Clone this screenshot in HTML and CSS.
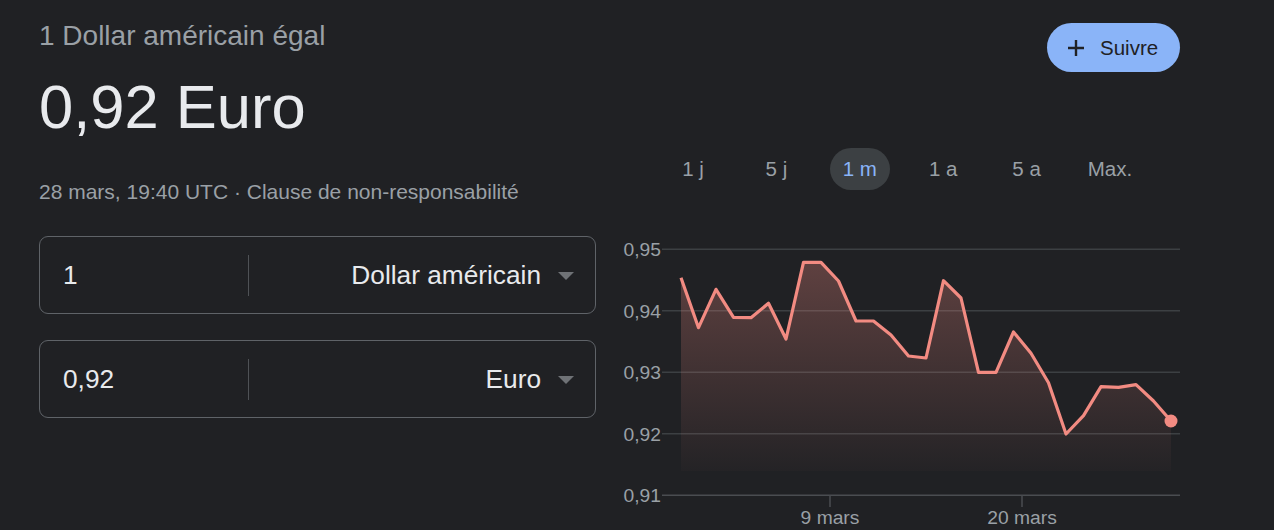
FILE: index.html
```html
<!DOCTYPE html>
<html lang="fr">
<head>
<meta charset="UTF-8">
<meta name="viewport" content="width=device-width, initial-scale=1.0">
<title>Convertisseur de devises</title>
<link rel="stylesheet" href="styles.css">
</head>
<body>
<div class="converter">
    <div class="summary">
        <div class="summary-label">1 Dollar américain égal</div>
        <div class="summary-value">0,92 Euro</div>
        <div class="summary-date">28 mars, 19:40 UTC · Clause de non-responsabilité</div>

        <div class="currency-box">
            <div class="currency-amount">1</div>
            <div class="currency-divider"></div>
            <div class="currency-select">
                <span>Dollar américain</span>
                <span class="dropdown-arrow"></span>
            </div>
        </div>
        <div class="currency-box">
            <div class="currency-amount">0,92</div>
            <div class="currency-divider"></div>
            <div class="currency-select">
                <span>Euro</span>
                <span class="dropdown-arrow"></span>
            </div>
        </div>
    </div>

    <div class="chart-panel">
        <button class="follow-button">
            <svg width="18" height="18" viewBox="0 0 18 18">
                <path d="M9 1v16M1 9h16" stroke="#202124" stroke-width="2.4" fill="none"/>
            </svg>
            Suivre
        </button>

        <div class="range-tabs">
            <div class="range-tab">1 j</div>
            <div class="range-tab">5 j</div>
            <div class="range-tab active">1 m</div>
            <div class="range-tab">1 a</div>
            <div class="range-tab">5 a</div>
            <div class="range-tab">Max.</div>
        </div>

        <svg class="chart" width="569" height="300" viewBox="0 0 569 300">
            <defs>
                <linearGradient id="areaFill" x1="0" y1="0" x2="0" y2="1">
                    <stop offset="0" stop-color="#f28b82" stop-opacity="0.3"/>
                    <stop offset="1" stop-color="#f28b82" stop-opacity="0.02"/>
                </linearGradient>
            </defs>

            <!-- grid -->
            <g stroke="#3c4043" stroke-width="1.5">
                <line x1="51" y1="19.3" x2="569" y2="19.3"/>
                <line x1="51" y1="80.8" x2="569" y2="80.8"/>
                <line x1="51" y1="142.3" x2="569" y2="142.3"/>
                <line x1="51" y1="203.8" x2="569" y2="203.8"/>
                <line x1="51" y1="265.3" x2="569" y2="265.3" stroke="#4a4d51"/>
                <line x1="219" y1="265" x2="219" y2="277" stroke="#4a4d51"/>
                <line x1="411" y1="265" x2="411" y2="277" stroke="#4a4d51"/>
            </g>

            <g class="axis-label" text-anchor="end">
                <text x="50" y="26.3">0,95</text>
                <text x="50" y="87.8">0,94</text>
                <text x="50" y="149.3">0,93</text>
                <text x="50" y="210.8">0,92</text>
                <text x="50" y="272.3">0,91</text>
            </g>
            <g class="axis-label" text-anchor="middle">
                <text x="219" y="294">9 mars</text>
                <text x="411" y="294">20 mars</text>
            </g>

            <polygon fill="url(#areaFill)" points="70,241 70,47.7 87.5,97.7 105,59.3 122.5,87.3 140,87.7 157.5,73.3 175,109 192.5,32.3 210,32.3 227.5,51 245,91 262.5,91 280,105 297.5,126 315,128 332.5,50.7 350,68 367.5,142.3 385,142.3 402.5,102 420,123.3 437.5,152.7 455,204 472.5,185.7 490,156.7 507.5,157.3 525,154.7 542.5,171 560,191 560,241"/>
            <polyline fill="none" stroke="#f28b82" stroke-width="3.2" stroke-linejoin="round" points="70,47.7 87.5,97.7 105,59.3 122.5,87.3 140,87.7 157.5,73.3 175,109 192.5,32.3 210,32.3 227.5,51 245,91 262.5,91 280,105 297.5,126 315,128 332.5,50.7 350,68 367.5,142.3 385,142.3 402.5,102 420,123.3 437.5,152.7 455,204 472.5,185.7 490,156.7 507.5,157.3 525,154.7 542.5,171 560,191"/>
            <circle cx="560" cy="191" r="6.5" fill="#f28b82"/>
        </svg>
    </div>
</div>
</body>
</html>
```

FILE: styles.css
```css
body {
    margin: 0;
    background-color: #202124;
    font-family: "Liberation Sans", Arial, sans-serif;
    color: #e8eaed;
    height: 530px;
    overflow: hidden;
}
.converter {
    display: flex;
    gap: 15px;
    padding-left: 39px;
    width: 1141px;
}
.summary {
    width: 557px;
    padding-top: 20px;
}
.summary-label {
    font-size: 28px;
    line-height: 32px;
    color: #9aa0a6;
}
.summary-value {
    font-size: 61.5px;
    line-height: 72px;
    margin-top: 18.5px;
    color: #e8eaed;
}
.summary-date {
    font-size: 21px;
    line-height: 24px;
    margin-top: 37.5px;
    color: #9aa0a6;
}
.currency-box {
    display: flex;
    align-items: center;
    height: 76px;
    border: 1px solid #5f6368;
    border-radius: 9px;
    margin-top: 26px;
}
.summary-date + .currency-box {
    margin-top: 32px;
}
.currency-amount {
    width: 185px;
    padding-left: 23px;
    padding-top: 1px;
    font-size: 26.25px;
    color: #e8eaed;
}
.currency-divider {
    width: 1px;
    height: 41px;
    background-color: #4f5256;
}
.currency-select {
    flex: 1;
    display: flex;
    align-items: center;
    justify-content: flex-end;
    gap: 17px;
    padding-right: 21px;
    font-size: 26.25px;
    color: #e8eaed;
}
.dropdown-arrow {
    width: 0;
    height: 0;
    border-left: 8.5px solid transparent;
    border-right: 8.5px solid transparent;
    border-top: 8.5px solid #6f7276;
    margin-top: 2px;
}
.chart-panel {
    width: 569px;
    display: flex;
    flex-direction: column;
}
.follow-button {
    align-self: flex-end;
    margin-top: 23px;
    display: flex;
    align-items: center;
    gap: 15px;
    height: 49px;
    width: 133px;
    padding: 0 0 0 20px;
    border: none;
    border-radius: 25px;
    background-color: #8ab4f8;
    color: #202124;
    font-family: "Liberation Sans", Arial, sans-serif;
    font-size: 20.5px;
}
.range-tabs {
    display: flex;
    gap: 23.4px;
    margin-top: 76px;
    margin-left: 52px;
}
.range-tab {
    width: 60px;
    height: 42px;
    display: flex;
    align-items: center;
    justify-content: center;
    border-radius: 21px;
    font-size: 20.5px;
    color: #9aa0a6;
}
.range-tab.active {
    background-color: #3c4043;
    color: #8ab4f8;
}
.chart {
    display: block;
    margin-top: 40px;
}
.axis-label {
    font-family: "Liberation Sans", Arial, sans-serif;
    font-size: 19.25px;
    fill: #9aa0a6;
}
```
